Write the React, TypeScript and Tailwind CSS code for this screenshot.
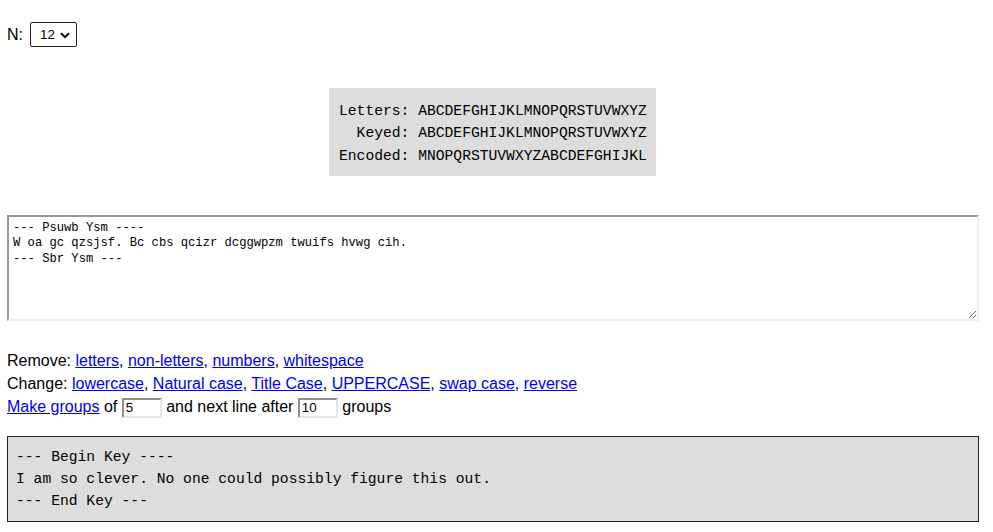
const removeLinks = ["letters", "non-letters", "numbers", "whitespace"];
const changeLinks = [
  "lowercase",
  "Natural case",
  "Title Case",
  "UPPERCASE",
  "swap case",
  "reverse",
];

const cipherText = `--- Psuwb Ysm ----
W oa gc qzsjsf. Bc cbs qcizr dcggwpzm twuifs hvwg cih.
--- Sbr Ysm ---`;

function LinkList({ items }: { items: string[] }) {
  return (
    <>
      {items.map((item, i) => (
        <span key={item}>
          <a href="#" className="text-[#0000ee] underline">
            {item}
          </a>
          {i < items.length - 1 ? ", " : ""}
        </span>
      ))}
    </>
  );
}

function SmallInput({ value }: { value: string }) {
  return (
    <input
      type="text"
      defaultValue={value}
      className="h-[20px] w-[40px] border-2 border-t-[#8f8f8f] border-l-[#8f8f8f] border-r-[#e6e6e6] border-b-[#e6e6e6] bg-white px-[2px] align-middle font-['Liberation_Sans',Arial,sans-serif] text-[13.33px] text-black outline-none"
    />
  );
}

export default function App() {
  return (
    <div className="min-h-[532px] bg-white font-['Liberation_Sans',Arial,sans-serif] text-[16px] text-black">
      <div className="flex items-center px-[7px] pt-[22px]">
        <span>N:</span>
        <div className="relative ml-[7px] flex h-[25px] w-[47px] items-center rounded-[2px] border border-[#222] bg-white pl-[9px] text-[13.33px]">
          12
          <svg
            className="absolute right-[6px] top-[9px]"
            width="10"
            height="7"
            viewBox="0 0 10 7"
          >
            <path d="M1 1.2 L5 5.2 L9 1.2" fill="none" stroke="#000" strokeWidth="2" />
          </svg>
        </div>
      </div>

      <div className="mt-[41px] flex w-[985px] justify-center">
        <pre className="h-[88px] w-[327px] bg-[#dddddd] px-[10px] pt-[11.5px] font-['Liberation_Mono',Consolas,monospace] text-[14.67px] leading-[22.5px] text-black">
          {`Letters: ABCDEFGHIJKLMNOPQRSTUVWXYZ
  Keyed: ABCDEFGHIJKLMNOPQRSTUVWXYZ
Encoded: MNOPQRSTUVWXYZABCDEFGHIJKL`}
        </pre>
      </div>

      <div className="mt-[39px] px-[7px]">
        <textarea
          defaultValue={cipherText}
          spellCheck={false}
          className="block h-[106px] w-[972px] border-2 border-t-[#999] border-l-[#999] border-r-[#eeeeee] border-b-[#eeeeee] bg-white pl-[4px] pt-[3.5px] font-['Liberation_Mono',Consolas,monospace] text-[12.17px] leading-[15.5px] text-black outline-none"
        />
      </div>

      <div className="mt-[28px] px-[7px] leading-[23px]">
        <div>
          Remove: <LinkList items={removeLinks} />
        </div>
        <div>
          Change: <LinkList items={changeLinks} />
        </div>
        <div>
          <a href="#" className="text-[#0000ee] underline">
            Make groups
          </a>{" "}
          of <SmallInput value="5" /> and next line after <SmallInput value="10" />{" "}
          groups
        </div>
      </div>

      <div className="mt-[18px] px-[7px]">
        <pre className="w-[972px] border border-[#222] bg-[#dddddd] px-[8px] py-[9px] font-['Liberation_Mono',Consolas,monospace] text-[14.67px] leading-[22px] text-black">
          {`--- Begin Key ----
I am so clever. No one could possibly figure this out.
--- End Key ---`}
        </pre>
      </div>
    </div>
  );
}
